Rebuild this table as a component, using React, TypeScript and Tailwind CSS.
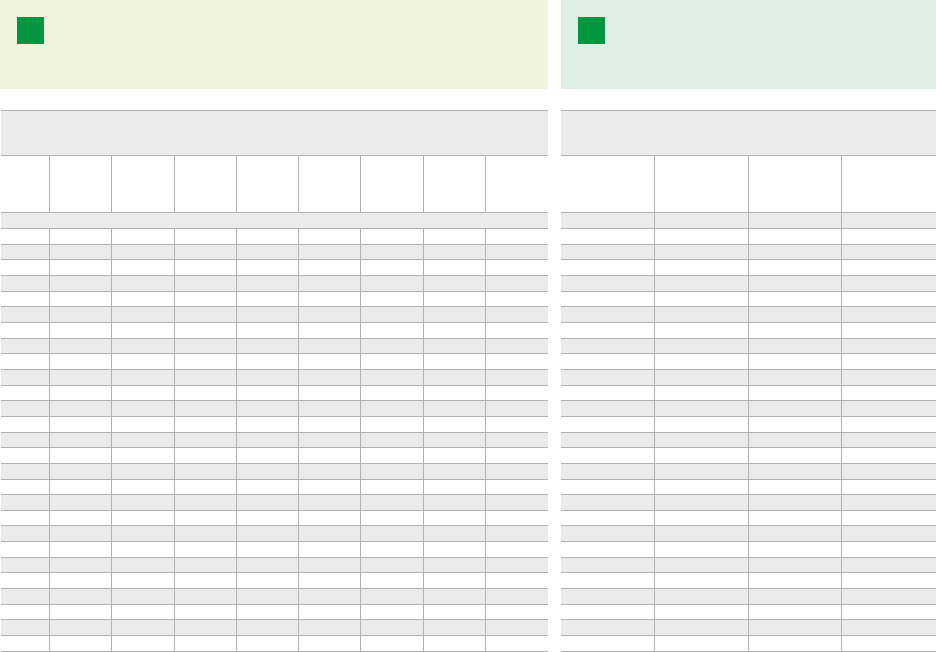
import React from 'react';

const ROWS = 27;

const Line = 'border-[#b1b1b1]';

const DataGrid: React.FC<{ cols: string; count: number; splitSection?: boolean }> = ({
  cols,
  count,
  splitSection,
}) => {
  const cells = Array.from({ length: count });
  return (
    <div className="flex flex-col">
      {/* title band */}
      <div className={`h-[46px] border-y ${Line} bg-[#ebebeb]`} />
      {/* column heads */}
      <div className={`grid ${cols} h-[57px] border-b ${Line}`}>
        {cells.map((_, i) => (
          <div key={i} className={`border-r ${Line} last:border-r-0`} />
        ))}
      </div>
      {/* section row */}
      {splitSection ? (
        <div className={`grid ${cols} h-[16px] border-b ${Line} bg-[#ebebeb]`}>
          {cells.map((_, i) => (
            <div key={i} className={`border-r ${Line} last:border-r-0`} />
          ))}
        </div>
      ) : (
        <div className={`h-[16px] border-b ${Line} bg-[#ebebeb]`} />
      )}
      {Array.from({ length: ROWS }).map((_, r) => (
        <div
          key={r}
          className={`grid ${cols} h-[15.666px] border-b ${Line} ${r % 2 === 1 ? 'bg-[#ebebeb]' : 'bg-white'}`}
        >
          {cells.map((_, i) => (
            <div key={i} className={`border-r ${Line} last:border-r-0`} />
          ))}
        </div>
      ))}
    </div>
  );
};

const Banner: React.FC<{ tint: string }> = ({ tint }) => (
  <div className={`h-[89px] ${tint} p-[17px]`}>
    <div className="h-[27px] w-[27px] bg-[#00963f]" />
  </div>
);

const App: React.FC = () => {
  return (
    <div className="flex h-[652px] w-[936px] gap-[13px] overflow-hidden bg-white font-['Liberation_Sans',sans-serif]">
      <div className="flex w-[548px] flex-col">
        <Banner tint="bg-[#f0f4dc]" />
        <div className="ml-[1px] mt-[21px]">
          <DataGrid cols="grid-cols-[49px_repeat(8,1fr)]" count={9} />
        </div>
      </div>
      <div className="flex flex-1 flex-col">
        <Banner tint="bg-[#e0efe5]" />
        <div className="mt-[21px]">
          <DataGrid cols="grid-cols-4" count={4} splitSection />
        </div>
      </div>
    </div>
  );
};

export default App;
